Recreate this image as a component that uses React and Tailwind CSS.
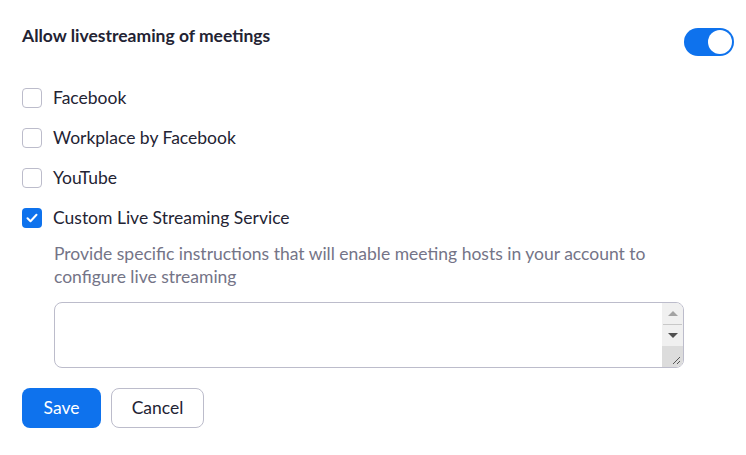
import React, { useState } from "react";

const options = [
  { id: "facebook", label: "Facebook", checked: false },
  { id: "workplace", label: "Workplace by Facebook", checked: false },
  { id: "youtube", label: "YouTube", checked: false },
  { id: "custom", label: "Custom Live Streaming Service", checked: true },
];

export default function App() {
  const [enabled, setEnabled] = useState(true);
  const [checked, setChecked] = useState(
    Object.fromEntries(options.map((o) => [o.id, o.checked]))
  );

  return (
    <div className="min-h-[455px] bg-white font-['Lato',sans-serif] text-[#232333]">
      <div className="pl-[22px] pr-[12px] pt-[25px]">
        <div className="flex items-start justify-between">
          <h2 className="text-[17.5px] font-bold leading-[22px]">Allow livestreaming of meetings</h2>
          <button
            type="button"
            onClick={() => setEnabled(!enabled)}
            className="mt-[3px] flex h-[28px] w-[50px] items-center justify-end rounded-full bg-[#0e72ed] px-[2px]"
          >
            <span className="h-[24px] w-[24px] rounded-full bg-white" />
          </button>
        </div>

        <div className="mt-[32px] flex flex-col gap-[20px]">
          {options.map((o) => (
            <label key={o.id} className="flex cursor-pointer items-center gap-[11px]">
              <span
                onClick={() => setChecked({ ...checked, [o.id]: !checked[o.id] })}
                className={
                  checked[o.id]
                    ? "grid h-[20px] w-[20px] place-items-center rounded-[4px] bg-[#0e72ed]"
                    : "h-[20px] w-[20px] rounded-[4px] border border-[#bcbccb] bg-white"
                }
              >
                {checked[o.id] ? (
                  <svg width="12" height="10" viewBox="0 0 12 10" fill="none">
                    <path d="M1.5 5.2l3 3 6-6.5" stroke="white" strokeWidth="2" strokeLinecap="round" strokeLinejoin="round" />
                  </svg>
                ) : null}
              </span>
              <span className="text-[17.5px] leading-[20px]">{o.label}</span>
            </label>
          ))}
        </div>

        <div className="ml-[32px] mt-[14px] w-[630px]">
          <p className="text-[17.5px] leading-[23px] text-[#747487]">
            Provide specific instructions that will enable meeting hosts in your account to configure live streaming
          </p>
          <div className="mt-[14px] flex h-[66px] overflow-hidden rounded-[8px] border border-[#bcbccb] bg-white">
            <textarea
              className="h-full flex-1 resize-none px-2 py-1 text-[17.5px] outline-none"
              defaultValue=""
            />
            <div className="flex w-[21px] flex-col bg-[#f0f0f0]">
              <div className="flex h-[21px] items-center justify-center">
                <span className="h-0 w-0 border-x-[5px] border-b-[5px] border-x-transparent border-b-[#a3a3a3]" />
              </div>
              <div className="mx-[1px] h-px bg-[#c8c8c8]" />
              <div className="flex h-[20px] items-center justify-center">
                <span className="h-0 w-0 border-x-[5px] border-t-[5px] border-x-transparent border-t-[#505050]" />
              </div>
              <div className="mt-auto flex h-[21px] items-end justify-end bg-[#dcdcdc] p-[2px]">
                <svg width="10" height="10" viewBox="0 0 10 10">
                  <path d="M9 2L2 9M9 6L6 9" stroke="#555" strokeWidth="1" />
                </svg>
              </div>
            </div>
          </div>
        </div>

        <div className="mt-[20px] flex gap-[10px]">
          <button
            type="button"
            className="h-[40px] w-[79px] rounded-[8px] bg-[#0e72ed] text-[17.5px] text-white"
          >
            Save
          </button>
          <button
            type="button"
            className="h-[40px] w-[93px] rounded-[8px] border border-[#bcbccb] bg-white text-[17.5px] text-[#232333]"
          >
            Cancel
          </button>
        </div>
      </div>
    </div>
  );
}
